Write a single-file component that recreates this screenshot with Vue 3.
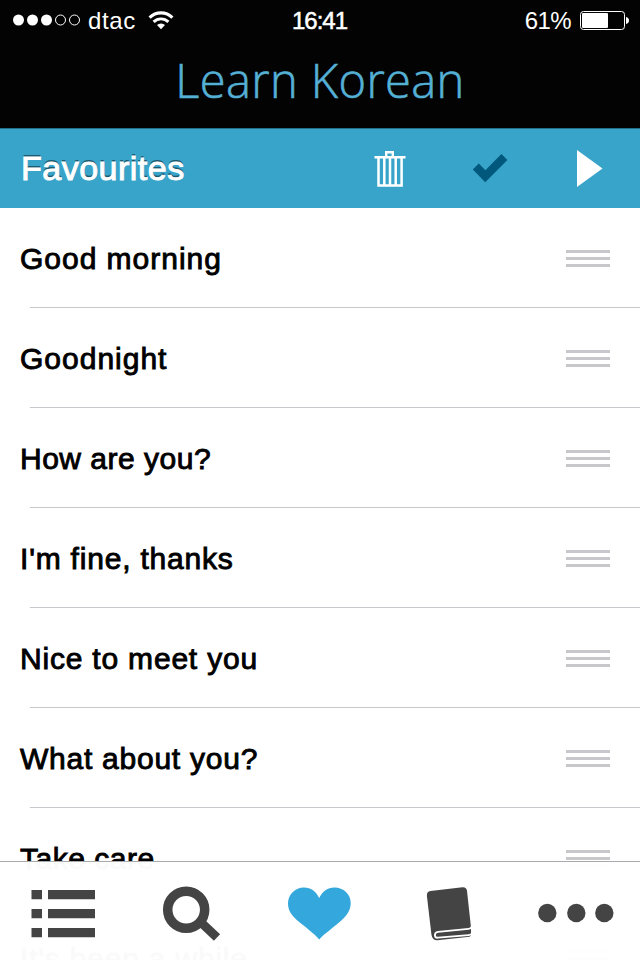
<template>
  <div class="app">
    <header class="top">
      <div class="status">
        <div class="status-left">
          <svg class="signal" width="68" height="12" viewBox="0 0 68 12">
            <circle v-for="n in 5" :key="n" :cx="5.5 + (n - 1) * 14" cy="6" :r="n <= 3 ? 5.5 : 5"
              :fill="n <= 3 ? '#fff' : 'none'" :stroke="n <= 3 ? 'none' : '#fff'" />
          </svg>
          <span class="carrier">dtac</span>
          <svg class="wifi" width="26" height="19" viewBox="0 0 26 19" fill="none" stroke="#fff">
            <path d="M1.6 6.6a16.2 16.2 0 0 1 22.8 0" stroke-width="3.1" />
            <path d="M5.6 10.9a10.5 10.5 0 0 1 14.8 0" stroke-width="2.9" />
            <path d="M13 18.2l-4-4.1a5.8 5.8 0 0 1 8 0z" fill="#fff" stroke="none" />
          </svg>
        </div>
        <span class="clock">16:41</span>
        <div class="status-right">
          <span class="percent">61%</span>
          <svg width="50" height="19" viewBox="0 0 50 19">
            <rect x="0.5" y="0.5" width="44" height="18" rx="3" fill="none" stroke="#fff" />
            <rect x="2" y="2" width="26" height="15" rx="1" fill="#fff" />
            <path d="M46 6c4 .6 4 6.400 0 7z" fill="#fff" />
          </svg>
        </div>
      </div>
      <h1 class="title">Learn Korean</h1>
    </header>

    <div class="toolbar">
      <h2 class="heading">Favourites</h2>
      <div class="actions">
        <button class="action">
          <svg width="32" height="38" viewBox="0 0 32 38" fill="none" stroke="#fff">
            <path d="M.5 7.300H31.500M12.200 7V2.200h6.600V7" stroke-width="2.400" />
            <path d="M4.500 7v28.400h23.100V7M10.300 7v28M16 7v28M21.700 7v28" stroke-width="2.500" />
          </svg>
        </button>
        <button class="action">
          <svg width="36" height="30" viewBox="0 0 36 30">
            <path d="M.8 15.500L6.800 9.600l6.600 6.600L29.400 0l6 6L13.200 28.200z" fill="#00587d" />
          </svg>
        </button>
        <button class="action">
          <svg width="26" height="38" viewBox="0 0 26 38">
            <path d="M0 0L25.500 18.500 0 37z" fill="#fff" />
          </svg>
        </button>
      </div>
    </div>

    <ul class="list">
      <li v-for="phrase in phrases" :key="phrase.text" class="row">
        <span class="phrase" :style="{ letterSpacing: phrase.spacing + 'px' }">{{ phrase.text }}</span>
        <span class="handle"><i></i><i></i><i></i></span>
      </li>
    </ul>

    <nav class="tabs">
      <a class="tab">
        <svg width="128" height="98" viewBox="0 0 128 98" fill="#444">
          <path d="M31.500 28h10.500v9.300H31.500zM48 28h47v9.300H48zM31.500 47h10.500v9.300H31.500zM48 47h47v9.300H48zM31.500 66h10.500v9.300H31.500zM48 66h47v9.300H48z" />
        </svg>
      </a>
      <a class="tab">
        <svg width="128" height="98" viewBox="0 0 128 98" fill="none" stroke="#444">
          <circle cx="58.200" cy="47.700" r="18.500" stroke-width="9.500" />
          <path d="M72 59.500L89 75.500" stroke-width="9" />
        </svg>
      </a>
      <a class="tab">
        <svg width="128" height="98" viewBox="0 0 128 98" fill="#34a8dc">
          <path d="M63.200 77.500C60 73.500 55 69.500 47 63C38 56 32 50.500 32 41.500C32 32.500 39 25.500 48 25.500C55 25.500 60 29.500 63.200 36C66.500 29.500 71.500 25.500 78.500 25.500C87.500 25.500 94.700 32 94.700 41C94.700 50.500 88.500 56 80 63C72 69.500 66.500 73.500 63.200 77.500z" />
        </svg>
      </a>
      <a class="tab">
        <svg width="128" height="98" viewBox="0 0 128 98">
          <path d="M46.500 28.900L78.500 25.200Q82.500 24.900 83 28.900L87 65.500V73.500L85.500 74.700L53.500 78.300Q48.500 78.500 47.500 73L42.900 34Q42.500 29.400 46.500 28.900z" fill="#444" />
          <path d="M87.800 64.500Q87 66.600 84.500 66.900L54 69.900Q50.700 70.500 50.900 73.300Q51.200 76 54 75.700L84.500 73.200Q86.500 73 87.800 71.500" fill="none" stroke="#fff" stroke-width="1.800" />
        </svg>
      </a>
      <a class="tab">
        <svg width="128" height="98" viewBox="0 0 128 98" fill="#444">
          <circle cx="35.300" cy="51" r="9.200" />
          <circle cx="64.300" cy="51" r="9.200" />
          <circle cx="92.300" cy="51" r="9.200" />
        </svg>
      </a>
    </nav>
  </div>
</template>

<script setup>
import { ref } from 'vue'

const phrases = ref([
  { text: 'Good morning', spacing: 0.98 },
  { text: 'Goodnight', spacing: 1 },
  { text: 'How are you?', spacing: 0.5 },
  { text: "I'm fine, thanks", spacing: 0.8 },
  { text: 'Nice to meet you', spacing: 0.8 },
  { text: 'What about you?', spacing: 0.75 },
  { text: 'Take care', spacing: 0.5 },
  { text: "It's been a while", spacing: 0.8 }
])
</script>

<style>
body {
  margin: 0;
  background: #fff;
}
</style>

<style scoped>
.app {
  position: relative;
  width: 640px;
  height: 960px;
  overflow: hidden;
  background: #fff;
  font-family: "Liberation Sans", Arial, sans-serif;
}

.top {
  height: 128px;
  background: #030303;
  color: #fff;
}

.status {
  display: grid;
  grid-template-columns: 1fr auto 1fr;
  align-items: center;
  height: 40px;
  padding: 0 10px 0 13px;
  font-size: 24px;
}

.status-left,
.status-right {
  display: flex;
  align-items: center;
}

.status-right {
  justify-content: flex-end;
  gap: 9px;
}

.carrier {
  margin: 1px 12px 0 7px;
  letter-spacing: 0.6px;
}

.clock {
  margin: 1px 4px 0 0;
  letter-spacing: -1px;
  -webkit-text-stroke: 0.5px #fff;
}

.percent {
  margin-top: 1px;
  letter-spacing: -0.6px;
}

.title {
  margin: 10px 0 0;
  color: #55b0d5;
  font-family: "Open Sans", sans-serif;
  font-size: 47px;
  font-weight: 300;
  line-height: 60px;
  letter-spacing: 0.4px;
  text-align: center;
  -webkit-text-stroke: 0.6px #55b0d5;
}

.toolbar {
  display: flex;
  align-items: center;
  justify-content: space-between;
  box-sizing: border-box;
  height: 80px;
  padding-left: 21px;
  border-top: 1px solid #20718a;
  background: #38a4c9;
}

.heading {
  margin: 0;
  color: #fff;
  font-size: 34px;
  font-weight: 400;
  letter-spacing: 0.5px;
  -webkit-text-stroke: 1px #fff;
  text-shadow: 0 -2px 0 #1d5a70;
}

.actions {
  display: flex;
}

.action {
  display: flex;
  align-items: center;
  justify-content: center;
  width: 100px;
  height: 79px;
  padding: 0;
  border: 0;
  background: none;
}

.list {
  margin: 0;
  padding: 0;
  list-style: none;
}

.row {
  display: flex;
  align-items: center;
  justify-content: space-between;
  height: 100px;
  padding: 0 30px 0 20px;
  background: linear-gradient(#c8c7cc, #c8c7cc) 30px 99px / 610px 1px no-repeat;
}

.phrase {
  padding-top: 2px;
  color: #000;
  font-size: 30px;
  white-space: nowrap;
  -webkit-text-stroke: 0.9px #000;
}

.handle {
  display: flex;
  flex-direction: column;
  gap: 4px;
  width: 44px;
}

.handle i {
  height: 3px;
  background: #c7c7cc;
}

.tabs {
  position: absolute;
  left: 0;
  bottom: 0;
  display: flex;
  width: 640px;
  height: 98px;
  border-top: 1px solid #a9a9ab;
  background: rgba(255, 255, 255, 0.98);
}

.tab {
  width: 128px;
  height: 98px;
}
</style>
